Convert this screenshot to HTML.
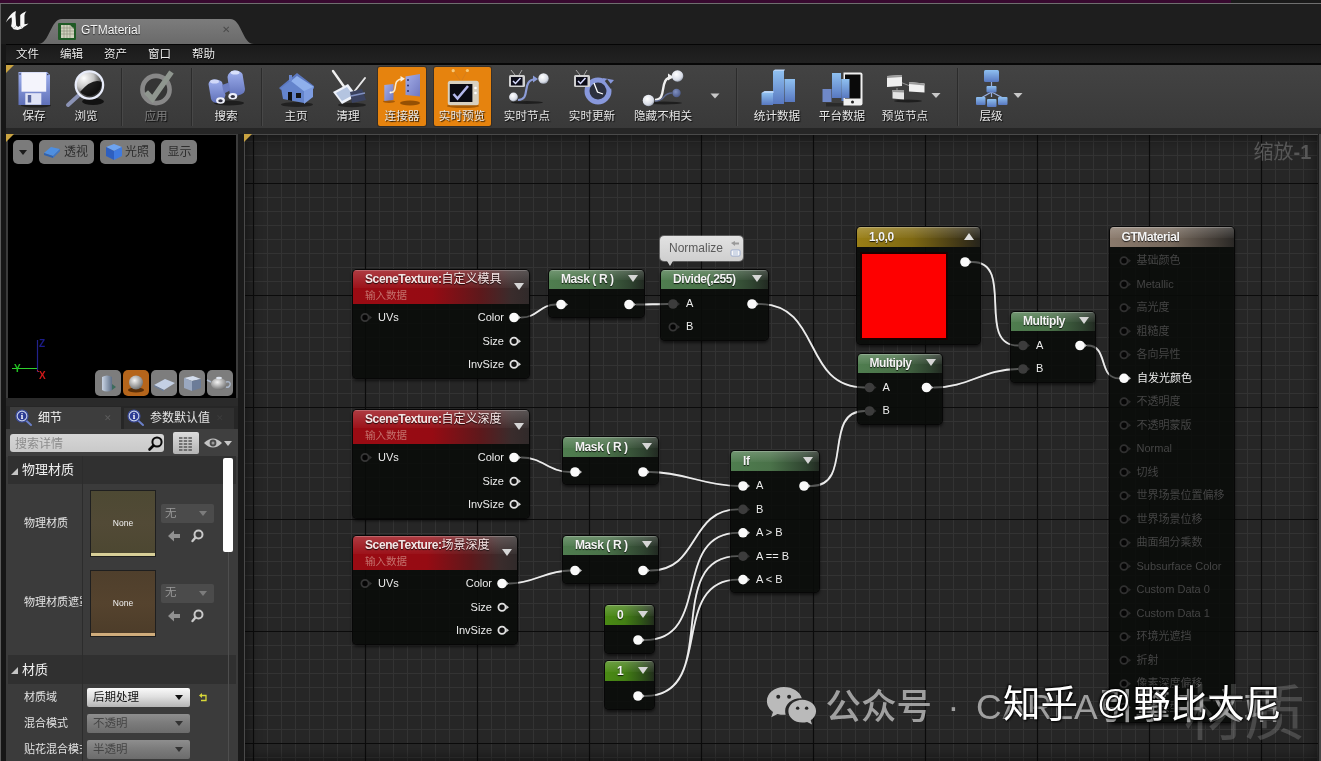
<!DOCTYPE html>
<html lang="zh"><head><meta charset="utf-8"><title>GTMaterial</title><style>
*{box-sizing:border-box;margin:0;padding:0}
html,body{width:1321px;height:761px;overflow:hidden;background:#1d1d1d}
body{position:relative;font-family:"Liberation Sans","Noto Sans CJK SC",sans-serif;font-size:12px;color:#e6e6e6;line-height:1}
#app{position:absolute;left:0;top:0;width:1321px;height:761px;overflow:hidden;will-change:transform}
.a{position:absolute}
.t{position:absolute;white-space:nowrap;line-height:1}
.c{transform:translateY(-50%)}
#menubar span{position:absolute;top:10px;font-size:11.5px;color:#ececec;transform:translateY(-50%);text-shadow:0 1px 1px #000}
.tl{position:absolute;top:116px;font-size:11.6px;color:#e6e6e6;transform:translate(-50%,-50%);white-space:nowrap;text-shadow:1px 1px 1px rgba(0,0,0,.85)}
.sep{position:absolute;top:68px;width:1px;height:58px;background:#2b2b2b;box-shadow:1px 0 0 #474747}
.hot{position:absolute;top:67px;height:59px;background:#e6830e;border-radius:2px;box-shadow:0 0 0 1px rgba(40,20,0,.35)}
.corner{position:absolute;width:0;height:0;border-top:8px solid #c9a341;border-right:8px solid transparent}
.node{position:absolute;border-radius:4px;background:rgba(9,11,9,.88);box-shadow:0 0 0 1px #070707,0 2px 3px 1px rgba(0,0,0,.55)}
.hd{position:absolute;left:0;top:0;right:0;border-radius:4px 4px 0 0;overflow:hidden}
.hd:after{content:"";position:absolute;left:0;right:0;top:0;height:55%;background:linear-gradient(to bottom,rgba(255,255,255,.2),rgba(255,255,255,.03));box-shadow:inset 0 1px 0 rgba(255,255,255,.22)}
.nt b{font-weight:normal;letter-spacing:0}
.nt{position:absolute;font-weight:bold;font-size:12px;letter-spacing:-.4px;color:#f4f4f4;white-space:nowrap;transform:translateY(-50%);text-shadow:0 1px 1px rgba(0,0,0,.8);z-index:2}
.ns{position:absolute;font-size:10.5px;color:#c4706c;white-space:nowrap;transform:translateY(-50%);z-index:2}
.pl{position:absolute;font-size:11px;color:#ececec;white-space:nowrap;transform:translateY(-50%)}
.pr{position:absolute;font-size:11px;color:#ececec;white-space:nowrap;transform:translate(-100%,-50%)}
.pd{position:absolute;font-size:11px;color:#454545;white-space:nowrap;transform:translateY(-50%)}
.tri{position:absolute;width:0;height:0;border-left:5px solid transparent;border-right:5px solid transparent;border-top:7px solid #d6d6d6;z-index:2}
.triu{position:absolute;width:0;height:0;border-left:5px solid transparent;border-right:5px solid transparent;border-bottom:7px solid #e0e0e0;z-index:2}
.vb{position:absolute;height:26px;border-radius:5px;background:#7b7b7b}
.lab{position:absolute;font-size:11px;color:#e2e2e2;white-space:nowrap;transform:translateY(-50%)}
.dd{position:absolute;height:19px;border-radius:2px;font-size:11.5px}
.dd span{position:absolute;left:8px;top:50%;transform:translateY(-50%);white-space:nowrap}
.dd i{position:absolute;right:7px;top:7px;width:0;height:0;border-left:4.5px solid transparent;border-right:4.5px solid transparent;border-top:5px solid #111}
</style></head><body>
<div id="app">
<div class="a" style="left:0;top:0;width:1321px;height:44px;background:#1e1e1e"></div>
<div class="a" style="left:0;top:0;width:1231px;height:3px;background:#38092f"></div>
<div class="a" style="left:1231px;top:0;width:90px;height:3px;background:#1a1a1a"></div>
<div class="a" style="left:0;top:3px;width:1321px;height:1px;background:#6f6f6f"></div>
<div class="a" style="left:0;top:4px;width:1px;height:757px;background:#5c5c5c"></div>
<div class="a" style="left:1px;top:44px;width:5px;height:717px;background:#161616"></div>
<svg class="a" style="left:0;top:4px" width="60" height="35" viewBox="0 0 1305 761"><g fill="#f8f8f8"><path d="M130 400 C175 285 255 190 345 150 L335 235 C342 300 346 400 352 470 L300 525 L240 485 C262 410 262 330 250 288 C200 318 160 358 130 400Z"/><path d="M575 158 C505 188 455 218 440 242 L440 470 L482 532 L522 492 C562 472 592 452 618 424 C588 436 560 441 532 441 L532 252 C536 216 552 186 575 158Z"/><path d="M240 485 L300 525 L352 470 L396 502 L440 470 L482 532 L385 566 L295 548Z"/></g></svg>
<svg class="a" style="left:38px;top:19px" width="216" height="25" viewBox="0 0 216 25"><defs><linearGradient id="tg" x1="0" y1="0" x2="0" y2="1"><stop offset="0" stop-color="#7c7c7c"/><stop offset="1" stop-color="#6a6a6a"/></linearGradient></defs><path d="M0 25 C12 25 12 0 24 0 L192 0 C204 0 204 25 216 25 Z" fill="url(#tg)"/><rect x="20" y="4" width="18" height="17" rx="1" fill="#1f5a25"/><path d="M23 6 h9 l4 4 v9 h-13 z" fill="#cfd2bd"/><path d="M23 9h13M23 12h13M23 15h13M26 6v13M29 6v13M32 6v13" stroke="#8f947e" stroke-width=".7"/></svg>
<div class="t c" style="left:81px;top:30px;font-size:12px;color:#f4f4f4;text-shadow:0 1px 1px #222">GTMaterial</div>
<div class="t c" style="left:222px;top:30px;font-size:10px;color:#4a4a4a">✕</div>
<div class="a" style="left:6px;top:44px;width:1315px;height:1px;background:#050505"></div>
<div class="a" id="menubar" style="left:6px;top:45px;width:1315px;height:18px;background:linear-gradient(#1a1a1a,#222)"><span style="left:10px">文件</span><span style="left:54px">编辑</span><span style="left:98px">资产</span><span style="left:142px">窗口</span><span style="left:186px">帮助</span></div>
<div class="a" style="left:6px;top:63px;width:1315px;height:2px;background:#070707"></div>
<div class="a" style="left:6px;top:65px;width:1315px;height:63px;background:linear-gradient(#434343,#393939)"></div>
<div class="a" style="left:6px;top:128px;width:1315px;height:6px;background:#262626"></div>
<div class="corner" style="left:6px;top:65px"></div>
<div class="hot" style="left:378px;width:48px"></div>
<div class="hot" style="left:434px;width:57px"></div>
<div class="sep" style="left:121px"></div>
<div class="sep" style="left:191px"></div>
<div class="sep" style="left:261px"></div>
<div class="sep" style="left:736px"></div>
<div class="sep" style="left:957px"></div>
<div class="tl" style="left:34px;color:#e6e6e6">保存</div>
<div class="tl" style="left:86px;color:#e6e6e6">浏览</div>
<div class="tl" style="left:156px;color:#808080">应用</div>
<div class="tl" style="left:226px;color:#e6e6e6">搜索</div>
<div class="tl" style="left:296px;color:#e6e6e6">主页</div>
<div class="tl" style="left:348px;color:#e6e6e6">清理</div>
<div class="tl" style="left:402px;color:#e6e6e6">连接器</div>
<div class="tl" style="left:462px;color:#e6e6e6">实时预览</div>
<div class="tl" style="left:527px;color:#e6e6e6">实时节点</div>
<div class="tl" style="left:592px;color:#e6e6e6">实时更新</div>
<div class="tl" style="left:663px;color:#e6e6e6">隐藏不相关</div>
<div class="tl" style="left:777px;color:#e6e6e6">统计数据</div>
<div class="tl" style="left:842px;color:#e6e6e6">平台数据</div>
<div class="tl" style="left:905px;color:#e6e6e6">预览节点</div>
<div class="tl" style="left:991px;color:#e6e6e6">层级</div>
<svg class="a" style="left:0;top:64px" width="1321" height="64" viewBox="0 64 1321 64">
<defs>
<linearGradient id="lav" x1="0" y1="0" x2="0" y2="1"><stop offset="0" stop-color="#9fb0ee"/><stop offset="1" stop-color="#5f70b8"/></linearGradient>
<linearGradient id="blu" x1="0" y1="0" x2="0" y2="1"><stop offset="0" stop-color="#8fc0f0"/><stop offset="1" stop-color="#5878c0"/></linearGradient>
<linearGradient id="blu2" x1="0" y1="0" x2="1" y2="1"><stop offset="0" stop-color="#a4aee8"/><stop offset="1" stop-color="#7078c0"/></linearGradient>
<radialGradient id="lens" cx=".3" cy=".25" r=".9"><stop offset="0" stop-color="#ffffff"/><stop offset=".4" stop-color="#c4c4c4"/><stop offset=".7" stop-color="#4a4a4a"/><stop offset="1" stop-color="#111"/></radialGradient>
<radialGradient id="ball" cx=".4" cy=".35" r=".7"><stop offset="0" stop-color="#ffffff"/><stop offset=".7" stop-color="#d8dce6"/><stop offset="1" stop-color="#9098a8"/></radialGradient>
<radialGradient id="ballb" cx=".4" cy=".35" r=".7"><stop offset="0" stop-color="#8090c0"/><stop offset="1" stop-color="#4a5888"/></radialGradient>
</defs>
<ellipse cx="36" cy="105.5" rx="15" ry="2" fill="#000" opacity="0.45"/>
<path d="M18.500 72 H47 L50 75 V105 H18.500z" fill="url(#lav)"/>
<rect x="21.500" y="72.300" width="24.700" height="19.400" fill="#f4f4fc"/><circle cx="20" cy="74" r=".8" fill="#334"/><circle cx="47.800" cy="74.500" r=".8" fill="#334"/>
<rect x="25.300" y="93.200" width="16" height="11.500" fill="#e0e4f6"/><rect x="27.800" y="95" width="3.400" height="7.500" fill="#56649c"/>
<ellipse cx="93" cy="101.5" rx="11" ry="3.5" fill="#000" opacity="0.7"/>
<path d="M79 95 L68 105" stroke="#8a92b4" stroke-width="4" stroke-linecap="round"/>
<circle cx="89.400" cy="85" r="13.700" fill="url(#lens)" stroke="#e8ecfa" stroke-width="2.300"/>
<path d="M80 92 Q92 78 101.500 82 A12.500 12.500 0 0 1 80 92z" fill="#0c0c0c" opacity=".9"/>
<circle cx="156" cy="89.500" r="13.600" fill="#353535" stroke="#888" stroke-width="4.600"/>
<path d="M146 92 L152.500 99 L171.500 72" fill="none" stroke="#8f968f" stroke-width="5.500" stroke-linejoin="miter"/>
<ellipse cx="229" cy="103" rx="15" ry="2.5" fill="#000" opacity="0.5"/>
<path d="M208.500 84 q.500 -4 5 -4.500 q6 -.500 8.500 2.500 l3.500 13 q-1 6 -8 8 q-5 0 -6.500 -4z" fill="url(#lav)"/>
<path d="M227.500 77 q.500 -5 6.500 -6.500 q6 -.500 8.500 3.500 l2.500 15 q0 4 -4 5.500 l-8 2.500 q-3 -1 -3.500 -5z" fill="url(#lav)"/>
<path d="M222 85 l7 -2.500 l1 8 l-6 3z" fill="#6c7cc0"/>
<ellipse cx="214.500" cy="81.500" rx="4.500" ry="2" fill="#d0d8f8"/><ellipse cx="235" cy="72.500" rx="4.500" ry="2" fill="#d8e0fc"/>
<ellipse cx="220.500" cy="100.500" rx="4.400" ry="3.300" fill="#eef0fa"/><ellipse cx="220.500" cy="100.800" rx="2.200" ry="1.500" fill="#334"/>
<ellipse cx="232.800" cy="96.300" rx="4.400" ry="3.300" fill="#eef0fa"/><ellipse cx="232.800" cy="96.600" rx="2.200" ry="1.500" fill="#334"/>
<ellipse cx="297" cy="104.5" rx="16" ry="2.5" fill="#000" opacity="0.45"/>
<path d="M279 88 L297 73 L314 86 L314 89 L297 78 L281 90z" fill="#5c78c0"/>
<path d="M281 88 L297 76 L304 82 V103 L283 99z" fill="#6484cc"/>
<path d="M297 76 L314 87 L305 92 L291 81z" fill="#8fb0ec"/>
<path d="M304 91 L313 87 V97 L304 104z" fill="#7d9ce0"/>
<rect x="289" y="75" width="3" height="6" fill="#6a88d0"/>
<path d="M288 92 h4 v9 l-4 -1z" fill="#111"/><path d="M296 93 h5 v5 h-5z" fill="#151515"/>
<ellipse cx="352" cy="105" rx="14" ry="2.2" fill="#000" opacity="0.45"/>
<path d="M333 71 L345 88" stroke="#f0f0f0" stroke-width="2.400" stroke-linecap="round"/>
<path d="M333 92 L348 84 L357 96 L342 104z" fill="#eef2fa"/><path d="M336 93 L347 87 L353 95 L342 101z" fill="#b4c4e0"/>
<path d="M354 92 L365 78" stroke="#e8e8e8" stroke-width="2" stroke-linecap="round"/>
<path d="M350 92 L362 89 L366 100 L352 103z" fill="#3a4260"/><path d="M351 96 l14 -3" stroke="#8090c0" stroke-width="1.500"/>
<ellipse cx="410" cy="103" rx="10" ry="2.600" fill="#6a3400" opacity=".65"/><ellipse cx="389" cy="101.500" rx="6" ry="1.500" fill="#6a3400" opacity=".5"/>
<path d="M384.300 85 L393.500 84 V100 L384.300 101z" fill="url(#blu2)"/>
<path d="M405.500 76.500 L420 74 V96.500 L405.500 95z" fill="url(#blu2)"/>
<path d="M391 92.500 C399 92 391 80 402 79" fill="none" stroke="#fbe8c8" stroke-width="1.600"/><path d="M400.500 76 l4.500 2.800 l-4.500 3z" fill="#fbf0dc"/>
<circle cx="408" cy="80" r="1" fill="#2a3070"/><circle cx="408" cy="85.500" r="1" fill="#2a3070"/><circle cx="408" cy="91" r="1" fill="#2a3070"/><circle cx="390.500" cy="92.500" r="1" fill="#fff"/>
<ellipse cx="463" cy="106" rx="16" ry="2" fill="#7a3e00" opacity=".6"/>
<circle cx="453.200" cy="70.700" r="1.600" fill="#f6c878"/><circle cx="467.400" cy="70.500" r="1.600" fill="#f6c878"/>
<path d="M454 72 L460 80 M466.500 72 L462 80" stroke="#d07c20" stroke-width=".8"/>
<rect x="447.800" y="80.700" width="31" height="24.600" rx="2.500" fill="#d8d0c0"/>
<rect x="449.800" y="84" width="22.600" height="18" fill="#0a0a12"/>
<path d="M453.500 94 L457.500 98.500 L468 86" fill="none" stroke="#b4b8ec" stroke-width="2.600"/>
<circle cx="475.500" cy="88" r="1.300" fill="#fff"/><circle cx="475.500" cy="93" r="1.300" fill="#fff"/>
<path d="M511 70 l4 5 M522 70 l-3 5" stroke="#bbb" stroke-width=".8"/>
<rect x="509" y="75" width="16" height="12" rx="1.500" fill="#d0d0d0"/><rect x="511" y="77" width="11.500" height="8.500" fill="#0c0c18"/><path d="M513 81 l2.500 2.500 l5 -5.500" fill="none" stroke="#d8dcff" stroke-width="1.500"/>
<path d="M518 100 C532 100 520 80 536 79" fill="none" stroke="#8c9cd8" stroke-width="2.200"/><path d="M533 75.500 l5 3.500 l-5 3.500z" fill="#8c9cd8"/>
<circle cx="543.500" cy="78.500" r="5.200" fill="url(#ball)"/><circle cx="513.500" cy="97" r="4.400" fill="url(#ball)"/>
<ellipse cx="527" cy="102.5" rx="16" ry="1.5" fill="#000" opacity="0.5"/>
<path d="M576 70 l4 5 M587 70 l-3 5" stroke="#bbb" stroke-width=".8"/>
<circle cx="598" cy="91" r="11" fill="#2c3040" stroke="#8898dc" stroke-width="5"/>
<path d="M603 78 l11 2 l-8 9z" fill="#8898dc"/><path d="M606 80 l6 8" stroke="#3c3c3c" stroke-width="3"/>
<path d="M594 83 L597.500 92 L603 94" fill="none" stroke="#fff" stroke-width="1.300"/>
<rect x="574" y="75" width="16" height="12" rx="1.500" fill="#d0d0d0"/><rect x="576" y="77" width="11.500" height="8.500" fill="#0c0c18"/><path d="M578 81 l2.500 2.500 l5 -5.500" fill="none" stroke="#d8dcff" stroke-width="1.500"/>
<ellipse cx="664" cy="103" rx="18" ry="1.5" fill="#000" opacity="0.5"/>
<path d="M655 100 C668 100 658 78 672 77" fill="none" stroke="#f0f0f0" stroke-width="2.400"/><path d="M668 73.500 l5.500 3.500 l-5.500 3.500z" fill="#f0f0f0"/>
<path d="M655 101 C666 101 662 93 672 93" fill="none" stroke="#5c6890" stroke-width="1.500"/>
<circle cx="677.500" cy="76" r="5.800" fill="url(#ball)"/><circle cx="676.500" cy="93" r="4.200" fill="url(#ballb)"/><circle cx="648.500" cy="100.500" r="5.800" fill="url(#ball)"/>
<path d="M710.5 93.5 h9 l-4.500 5z" fill="#c8c8c8"/>
<path d="M931.5 93 h9 l-4.500 5z" fill="#c8c8c8"/>
<path d="M1013.5 93 h9 l-4.500 5z" fill="#c8c8c8"/>
<path d="M761.500 93 h11.500 v12 h-11.500z" fill="url(#blu)"/><path d="M773 71 h11 v33 h-11z" fill="url(#blu)"/><path d="M784.500 79 h10.500 v23 h-10.500z" fill="url(#blu)"/>
<path d="M761.500 93 l3 -2 h9 v2z" fill="#b8d4f8"/><path d="M773 71 l2 -1.500 h10 l-1 1.500z" fill="#b8d4f8"/>
<path d="M822.500 89 h9 v13 h-9z" fill="#6f88c8"/><path d="M832 73 h9 v25 h-9z" fill="url(#blu)"/><path d="M841.500 79 h8 v22 h-8z" fill="url(#blu)"/>
<path d="M826 103 h26 l-2 3.500 h-24z" fill="#222" opacity=".7"/>
<path d="M843.500 72.500 h17 q2 0 2 2 v29 q0 2 -2 2 h-17z" fill="#f0f0f0"/><path d="M845 74.500 h15.500 v24 h-15.500z" fill="#0a0a0a"/><circle cx="852.500" cy="102" r="1.500" fill="#222"/>
<path d="M841.500 79 h8 v19 h-8z" fill="url(#blu)"/>
<path d="M900 82 L910 86 M897 88 L897 91" stroke="#aaa" stroke-width=".8"/>
<path d="M887 76 l15 -1 v11 l-15 1z" fill="#f0f0f0"/><path d="M909 82 l15.500 1.500 v9 l-15.500 -1z" fill="#f0f0f0"/><path d="M892.500 90 l11.500 .5 v9 l-11.500 -1z" fill="#e4e4e4"/>
<path d="M887 76 l15 -1 v2 l-15 1z M909 82 l15.500 1.500 v2 l-15.500 -1.500z M892.500 90 l11.500 .5 v2 l-11.500 -.5z" fill="#9a9a9a"/>
<ellipse cx="908" cy="101" rx="14" ry="1.5" fill="#000" opacity="0.5"/>
<path d="M991.500 81 V87 M991.500 92 V97 M991.500 92 L981 98 M991.500 92 L1003 98" stroke="#9ab0e0" stroke-width="1.200"/>
<rect x="984" y="70" width="15" height="12" rx="1.500" fill="url(#blu)"/><rect x="986.500" y="86" width="10" height="6.500" rx="1" fill="url(#blu)"/>
<rect x="976" y="97" width="9.500" height="8" rx="1" fill="url(#blu)"/><rect x="987" y="99" width="9.500" height="8" rx="1" fill="url(#blu)"/><rect x="998" y="97" width="9.500" height="8" rx="1" fill="url(#blu)"/>
</svg>
<div class="a" style="left:6px;top:134px;width:232px;height:627px;background:#3b3b3b"></div>
<div class="a" style="left:238px;top:134px;width:6px;height:627px;background:#1a1a1a"></div>
<div class="a" style="left:8px;top:135px;width:228px;height:263px;background:#000"></div>
<div class="corner" style="left:6px;top:134px"></div>
<div class="vb" style="left:13px;top:140px;width:20px;height:24px"></div>
<div class="a" style="left:18.500px;top:150px;width:0;height:0;border-left:4.500px solid transparent;border-right:4.500px solid transparent;border-top:5px solid #1c1c1c"></div>
<div class="vb" style="left:39px;top:140px;width:55px;height:24px"></div>
<svg class="a" style="left:43px;top:144px" width="18" height="15" viewBox="0 0 18 15"><path d="M1 9 L8 3 L17 5 L10 12z" fill="#4f8fe0"/><path d="M1 9 L10 12 v2 L1 11z" fill="#2f62b0"/><path d="M10 12 L17 5 v2 L10 14z" fill="#3a74c8"/></svg>
<div class="t c" style="left:64px;top:152px;font-size:12px;color:#2e2e2e">透视</div>
<div class="vb" style="left:100px;top:140px;width:55px;height:24px"></div>
<svg class="a" style="left:105px;top:143px" width="18" height="18" viewBox="0 0 18 18"><path d="M1 4 L9 1 L17 4 L9 8z" fill="#6ea4f0"/><path d="M1 4 L9 8 V17 L1 13z" fill="#2e5fc0"/><path d="M9 8 L17 4 V13 L9 17z" fill="#3f7ae0"/></svg>
<div class="t c" style="left:125px;top:152px;font-size:12px;color:#2e2e2e">光照</div>
<div class="vb" style="left:161px;top:140px;width:36px;height:24px"></div>
<div class="t c" style="left:167.500px;top:152px;font-size:12px;color:#2e2e2e">显示</div>
<svg class="a" style="left:7px;top:335px" width="50" height="48" viewBox="8 336 50 48"><path d="M38.500 341 V373" stroke="#22228c" stroke-width="1.200"/><path d="M13 369.500 H38" stroke="#2fd02f" stroke-width="1"/><path d="M38 371 l2 2" stroke="#c02020" stroke-width="1"/><text x="15" y="373" font-size="10" font-weight="bold" fill="#20c020" font-family="Liberation Sans,sans-serif">Y</text><text x="40" y="380" font-size="10" font-weight="bold" fill="#d01818" font-family="Liberation Sans,sans-serif">X</text><text x="40" y="348" font-size="10" font-weight="bold" fill="#1c1c88" font-family="Liberation Sans,sans-serif">Z</text></svg>
<div class="a" style="left:95px;top:370px;width:26px;height:26px;border-radius:5px;background:#7d7d7d"></div>
<div class="a" style="left:123px;top:370px;width:26px;height:26px;border-radius:5px;background:#b5651b"></div>
<div class="a" style="left:151px;top:370px;width:26px;height:26px;border-radius:5px;background:#7d7d7d"></div>
<div class="a" style="left:179px;top:370px;width:26px;height:26px;border-radius:5px;background:#7d7d7d"></div>
<div class="a" style="left:207px;top:370px;width:26px;height:26px;border-radius:5px;background:#7d7d7d"></div>
<svg class="a" style="left:95px;top:370px" width="138" height="26" viewBox="0 0 138 26"><defs><linearGradient id="cy" x1="0" x2="1"><stop offset="0" stop-color="#c9d4e4"/><stop offset="1" stop-color="#5f7088"/></linearGradient><radialGradient id="sp" cx=".4" cy=".35" r=".7"><stop offset="0" stop-color="#f4f4f4"/><stop offset="1" stop-color="#6a6a6a"/></radialGradient></defs><path d="M7 7 q5 -3 10 0 v13 q-5 3 -10 0z" fill="url(#cy)"/><path d="M17 14 l4 3 l-4 3z" fill="#3c6a5c"/><ellipse cx="41" cy="20" rx="8" ry="2.500" fill="#5a2f08"/><circle cx="41" cy="12.500" r="7" fill="url(#sp)"/><path d="M59 15 L70 9 L80 13 L69 20z" fill="#c4d0e4"/><path d="M59 15 L69 20 v1.500 L59 16.500z" fill="#6f7f99"/><path d="M89 8 L98 6 L106 9 L97 11z" fill="#d4deee"/><path d="M89 8 L97 11 V21 L89 18z" fill="#9aa8c0"/><path d="M97 11 L106 9 V18 L97 21z" fill="#6c7c98"/><ellipse cx="124" cy="14" rx="8" ry="6" fill="url(#sp)"/><path d="M131 12 q5 -1 4 3 q-1 3 -4 2" stroke="#aab6c8" stroke-width="1.500" fill="none"/><path d="M116 12 l-4 -2" stroke="#aab6c8" stroke-width="1.500"/><ellipse cx="124" cy="8" rx="3" ry="1.200" fill="#e0e6f0"/></svg>
<div class="a" style="left:6px;top:398px;width:232px;height:8px;background:#2a2a2a"></div>
<div class="a" style="left:6px;top:406px;width:232px;height:23px;background:#262626"></div>
<div class="a" style="left:10px;top:407px;width:111px;height:22px;background:#3d3d3d"></div>
<div class="a" style="left:124px;top:408px;width:110px;height:21px;background:#303030"></div>
<svg class="a" style="left:15px;top:409px" width="18" height="18" viewBox="0 0 18 18"><path d="M10.500 11 L16 16" stroke="#6a7fc8" stroke-width="2" stroke-linecap="round"/><circle cx="7" cy="7" r="6" fill="#c8d2ea" stroke="#3a4a9a" stroke-width="1.200"/><circle cx="7" cy="7" r="4.300" fill="#2d3c94"/><text x="7" y="10.300" text-anchor="middle" font-family="Liberation Serif,serif" font-weight="bold" font-size="9" fill="#fff">i</text></svg>
<svg class="a" style="left:127px;top:409px" width="18" height="18" viewBox="0 0 18 18"><path d="M10.500 11 L16 16" stroke="#6a7fc8" stroke-width="2" stroke-linecap="round"/><circle cx="7" cy="7" r="6" fill="#c8d2ea" stroke="#3a4a9a" stroke-width="1.200"/><circle cx="7" cy="7" r="4.300" fill="#2d3c94"/><text x="7" y="10.300" text-anchor="middle" font-family="Liberation Serif,serif" font-weight="bold" font-size="9" fill="#fff">i</text></svg>
<div class="t c" style="left:38px;top:418px;font-size:12px;color:#f0f0f0">细节</div>
<div class="t c" style="left:104px;top:418px;font-size:9px;color:#5c5c5c">✕</div>
<div class="t c" style="left:150px;top:418px;font-size:12px;color:#e4e4e4">参数默认值</div>
<div class="t c" style="left:216px;top:418px;font-size:9px;color:#3c3c3c">✕</div>
<div class="a" style="left:6px;top:429px;width:232px;height:28px;background:#3f3f3f"></div>
<div class="a" style="left:10px;top:434px;width:154px;height:18px;border-radius:3px;background:linear-gradient(#d6d6d6,#c9c9c9)"></div>
<div class="t c" style="left:15px;top:443.500px;font-size:12px;color:#8c8c8c">搜索详情</div>
<svg class="a" style="left:147px;top:435px" width="17" height="17" viewBox="0 0 17 17"><circle cx="10" cy="7" r="4.600" fill="none" stroke="#0a0a0a" stroke-width="2"/><path d="M6.500 10.500 L2.500 14.500" stroke="#0a0a0a" stroke-width="2.600" stroke-linecap="round"/></svg>
<div class="a" style="left:173px;top:432px;width:26px;height:22px;border-radius:2px;background:linear-gradient(#dcdcdc,#b4b4b4)"></div>
<svg class="a" style="left:178px;top:436px" width="16" height="15" viewBox="0 0 16 15"><path d="M1 2h14M1 5h14M1 8h14M1 11h14M1 14h14" stroke="#555" stroke-width="1.600" stroke-dasharray="3.500 1.200"/></svg>
<svg class="a" style="left:203px;top:436px" width="20" height="14" viewBox="0 0 20 14"><path d="M1 7 Q10 -2 19 7 Q10 16 1 7z" fill="#c4c4c4"/><circle cx="10" cy="7" r="3.400" fill="#4a4a4a"/><circle cx="10" cy="7" r="1.500" fill="#9a9a9a"/></svg>
<div class="a" style="left:224px;top:441px;width:0;height:0;border-left:4px solid transparent;border-right:4px solid transparent;border-top:5px solid #c8c8c8"></div>
<div class="a" style="left:8px;top:456px;width:228px;height:28px;background:#303030"></div>
<div class="a" style="left:11px;top:467.5px;width:0;height:0;border-bottom:7px solid #c4c4c4;border-left:7px solid transparent"></div>
<div class="t c" style="left:22px;top:469px;font-size:13px;color:#efefef">物理材质</div>
<div class="a" style="left:8px;top:655px;width:228px;height:29px;background:#303030"></div>
<div class="a" style="left:11px;top:667px;width:0;height:0;border-bottom:7px solid #c4c4c4;border-left:7px solid transparent"></div>
<div class="t c" style="left:22px;top:668.5px;font-size:13px;color:#efefef">材质</div>
<div class="a" style="left:82px;top:456px;width:1px;height:305px;background:#2c2c2c"></div>
<div class="a" style="left:228px;top:552px;width:1px;height:209px;background:#4e4e4e"></div>
<div class="a" style="left:90px;top:490px;width:66px;height:67px;background:#1f1f1f"></div>
<div class="a" style="left:91px;top:491px;width:64px;height:65px;background:linear-gradient(#4d4933,#524a36 50%,#4c4731)"></div>
<div class="a" style="left:91px;top:553px;width:64px;height:3px;background:#d8cf98"></div>
<div class="t" style="left:123px;top:523px;font-size:8.500px;color:#f4f4f4;transform:translate(-50%,-50%)">None</div>
<div class="dd" style="left:161px;top:504px;width:53px;background:#4b4b4b;color:#9a9a9a"><span style="left:4px">无</span><i style="border-top-color:#7c7c7c"></i></div>
<svg class="a" style="left:166px;top:528px" width="42" height="16" viewBox="0 0 42 16"><path d="M2 8 L8 2.500 V6 H14 V10 H8 V13.500z" fill="#909090"/><circle cx="32.500" cy="6.500" r="4" fill="none" stroke="#c8c8c8" stroke-width="2"/><path d="M29.500 9.500 L26.500 13" stroke="#c8c8c8" stroke-width="2.400" stroke-linecap="round"/></svg>
<div class="a" style="left:90px;top:569.5px;width:66px;height:67px;background:#1f1f1f"></div>
<div class="a" style="left:91px;top:570.5px;width:64px;height:65px;background:linear-gradient(#4f3f2c,#55432e 50%,#4c3c29)"></div>
<div class="a" style="left:91px;top:632.5px;width:64px;height:3px;background:#d0ad7c"></div>
<div class="t" style="left:123px;top:602.5px;font-size:8.500px;color:#f4f4f4;transform:translate(-50%,-50%)">None</div>
<div class="dd" style="left:161px;top:583.5px;width:53px;background:#4b4b4b;color:#9a9a9a"><span style="left:4px">无</span><i style="border-top-color:#7c7c7c"></i></div>
<svg class="a" style="left:166px;top:607.5px" width="42" height="16" viewBox="0 0 42 16"><path d="M2 8 L8 2.500 V6 H14 V10 H8 V13.500z" fill="#909090"/><circle cx="32.500" cy="6.500" r="4" fill="none" stroke="#c8c8c8" stroke-width="2"/><path d="M29.500 9.500 L26.500 13" stroke="#c8c8c8" stroke-width="2.400" stroke-linecap="round"/></svg>
<div class="lab" style="left:24px;top:523px">物理材质</div>
<div class="a" style="left:24px;top:590px;width:58px;height:24px;overflow:hidden"><div class="lab" style="left:0;top:12px">物理材质遮罩</div></div>
<div class="a" style="left:223px;top:458px;width:10px;height:94px;border-radius:2px;background:#fff"></div>
<div class="lab" style="left:24px;top:697px">材质域</div>
<div class="lab" style="left:24px;top:723px">混合模式</div>
<div class="a" style="left:24px;top:737px;width:58px;height:24px;overflow:hidden"><div class="lab" style="left:0;top:12px">贴花混合模式</div></div>
<div class="dd" style="left:87px;top:688px;width:103px;background:linear-gradient(#fafafa,#e0e0e0 45%,#b4b4b4);color:#111"><span style="left:6px">后期处理</span><i></i></div>
<div class="dd" style="left:87px;top:714px;width:103px;background:linear-gradient(#8e8e8e,#7c7c7c 45%,#6c6c6c);color:#454545"><span style="left:6px">不透明</span><i style="border-top-color:#333"></i></div>
<div class="dd" style="left:87px;top:740px;width:103px;background:linear-gradient(#8e8e8e,#7c7c7c 45%,#6c6c6c);color:#454545"><span style="left:6px">半透明</span><i style="border-top-color:#333"></i></div>
<svg class="a" style="left:198px;top:692px" width="10" height="10" viewBox="0 0 10 10"><path d="M3 3.500 H8 V8.500 H3" fill="none" stroke="#d8d838" stroke-width="1.300"/><path d="M4 1 L1 3.500 L4 6z" fill="#d8d838"/></svg>
<svg class="a" style="left:244px;top:134px" width="1077" height="627" viewBox="244 134 1077 627"><rect x="244" y="134" width="1077" height="627" fill="#262626"/><path d="M253.5 134 V761 M267.5 134 V761 M281.5 134 V761 M295.5 134 V761 M309.5 134 V761 M323.5 134 V761 M337.5 134 V761 M351.5 134 V761 M365.5 134 V761 M379.5 134 V761 M393.5 134 V761 M407.5 134 V761 M421.5 134 V761 M435.5 134 V761 M449.5 134 V761 M463.5 134 V761 M477.5 134 V761 M491.5 134 V761 M505.5 134 V761 M519.5 134 V761 M533.5 134 V761 M547.5 134 V761 M561.5 134 V761 M575.5 134 V761 M589.5 134 V761 M603.5 134 V761 M617.5 134 V761 M631.5 134 V761 M645.5 134 V761 M659.5 134 V761 M673.5 134 V761 M687.5 134 V761 M701.5 134 V761 M715.5 134 V761 M729.5 134 V761 M743.5 134 V761 M757.5 134 V761 M771.5 134 V761 M785.5 134 V761 M799.5 134 V761 M813.5 134 V761 M827.5 134 V761 M841.5 134 V761 M855.5 134 V761 M869.5 134 V761 M883.5 134 V761 M897.5 134 V761 M911.5 134 V761 M925.5 134 V761 M939.5 134 V761 M953.5 134 V761 M967.5 134 V761 M981.5 134 V761 M995.5 134 V761 M1009.5 134 V761 M1023.5 134 V761 M1037.5 134 V761 M1051.5 134 V761 M1065.5 134 V761 M1079.5 134 V761 M1093.5 134 V761 M1107.5 134 V761 M1121.5 134 V761 M1135.5 134 V761 M1149.5 134 V761 M1163.5 134 V761 M1177.5 134 V761 M1191.5 134 V761 M1205.5 134 V761 M1219.5 134 V761 M1233.5 134 V761 M1247.5 134 V761 M1261.5 134 V761 M1275.5 134 V761 M1289.5 134 V761 M1303.5 134 V761 M1317.5 134 V761 M244 141.5 H1321 M244 155.5 H1321 M244 169.5 H1321 M244 183.5 H1321 M244 197.5 H1321 M244 211.5 H1321 M244 225.5 H1321 M244 239.5 H1321 M244 253.5 H1321 M244 267.5 H1321 M244 281.5 H1321 M244 295.5 H1321 M244 309.5 H1321 M244 323.5 H1321 M244 337.5 H1321 M244 351.5 H1321 M244 365.5 H1321 M244 379.5 H1321 M244 393.5 H1321 M244 407.5 H1321 M244 421.5 H1321 M244 435.5 H1321 M244 449.5 H1321 M244 463.5 H1321 M244 477.5 H1321 M244 491.5 H1321 M244 505.5 H1321 M244 519.5 H1321 M244 533.5 H1321 M244 547.5 H1321 M244 561.5 H1321 M244 575.5 H1321 M244 589.5 H1321 M244 603.5 H1321 M244 617.5 H1321 M244 631.5 H1321 M244 645.5 H1321 M244 659.5 H1321 M244 673.5 H1321 M244 687.5 H1321 M244 701.5 H1321 M244 715.5 H1321 M244 729.5 H1321 M244 743.5 H1321 M244 757.5 H1321" stroke="#333" stroke-width="1" fill="none"/><path d="M253.5 134 V761 M365.5 134 V761 M477.5 134 V761 M589.5 134 V761 M701.5 134 V761 M813.5 134 V761 M925.5 134 V761 M1037.5 134 V761 M1149.5 134 V761 M1261.5 134 V761 M244 183.5 H1321 M244 295.5 H1321 M244 407.5 H1321 M244 519.5 H1321 M244 631.5 H1321 M244 743.5 H1321" stroke="#0b0b0b" stroke-width="1.2" fill="none"/></svg>
<div class="a" style="left:244px;top:134px;width:1077px;height:627px;box-shadow:inset 0 0 14px 2px rgba(0,0,0,.55);border-top:1px solid #4a4a4a;border-left:1px solid #4a4a4a"></div>
<div class="corner" style="left:244px;top:134px"></div>
<div class="t" style="left:1253.5px;top:142px;font-size:20px;color:#575757">缩放<b style="font-weight:bold">-1</b></div>
<div class="a" style="left:1318px;top:134px;width:1px;height:627px;background:#1c1c1c"></div>
<div class="a" style="left:1319px;top:134px;width:2px;height:627px;background:#464646"></div>
<svg class="a" style="left:0;top:0" width="1321" height="761" viewBox="0 0 1321 761"><path d="M521.5 317.5 C537.3 317.5 540.2 304.5 556.0 304.5 M636.5 304.5 C647.2 304.5 657.3 304.0 668.0 304.0 M759.5 304.0 C822.3 304.0 801.7 387.5 864.5 387.5 M521.5 457.5 C542.5 457.5 549.0 472.0 570.0 472.0 M650.5 472.0 C684.3 472.0 704.2 486.0 738.0 486.0 M509.5 583.5 C534.0 583.5 545.5 570.5 570.0 570.5 M650.5 570.5 C700.0 570.5 688.5 509.4 738.0 509.4 M645.5 640.0 C712.1 640.0 671.4 532.8 738.0 532.8 M645.5 696.0 C722.9 696.0 660.6 556.2 738.0 556.2 M645.5 696.0 C715.1 696.0 668.4 579.6 738.0 579.6 M811.5 486.0 C854.2 486.0 821.8 411.0 864.5 411.0 M934.0 387.5 C968.2 387.5 983.8 369.0 1018.0 369.0 M972.5 262.0 C1015.5 262.0 975.0 345.5 1018.0 345.5 M1087.5 345.5 C1108.9 345.5 1097.6 378.3 1119.0 378.3" fill="none" stroke="#ebebeb" stroke-width="1.8" stroke-linecap="round"/></svg>
<div class="node" style="left:353px;top:269.5px;width:176px;height:108px"><div class="hd" style="height:34px;background:linear-gradient(to right,#9a0b13 0%,#960b13 45%,#5e181b 72%,#3a2c2c 90%,#302a2a 100%)"></div><div class="nt" style="left:12px;top:9px;color:#f6e6e6">SceneTexture:<b>自定义模具</b></div><div class="ns" style="left:12px;top:25px">输入数据</div><div class="tri" style="right:5px;top:13px"></div></div>
<div class="pl" style="left:378px;top:316.8px">UVs</div>
<div class="pr" style="left:504px;top:316.8px">Color</div>
<div class="pr" style="left:504px;top:340.5px">Size</div>
<div class="pr" style="left:504px;top:363.6px">InvSize</div>
<div class="node" style="left:353px;top:409.5px;width:176px;height:108px"><div class="hd" style="height:34px;background:linear-gradient(to right,#9a0b13 0%,#960b13 45%,#5e181b 72%,#3a2c2c 90%,#302a2a 100%)"></div><div class="nt" style="left:12px;top:9px;color:#f6e6e6">SceneTexture:<b>自定义深度</b></div><div class="ns" style="left:12px;top:25px">输入数据</div><div class="tri" style="right:5px;top:13px"></div></div>
<div class="pl" style="left:378px;top:456.8px">UVs</div>
<div class="pr" style="left:504px;top:456.8px">Color</div>
<div class="pr" style="left:504px;top:480.5px">Size</div>
<div class="pr" style="left:504px;top:503.6px">InvSize</div>
<div class="node" style="left:353px;top:535.5px;width:164px;height:108px"><div class="hd" style="height:34px;background:linear-gradient(to right,#9a0b13 0%,#960b13 45%,#5e181b 72%,#3a2c2c 90%,#302a2a 100%)"></div><div class="nt" style="left:12px;top:9px;color:#f6e6e6">SceneTexture:<b>场景深度</b></div><div class="ns" style="left:12px;top:25px">输入数据</div><div class="tri" style="right:5px;top:13px"></div></div>
<div class="pl" style="left:378px;top:582.8px">UVs</div>
<div class="pr" style="left:492px;top:582.8px">Color</div>
<div class="pr" style="left:492px;top:606.5px">Size</div>
<div class="pr" style="left:492px;top:629.6px">InvSize</div>
<div class="node" style="left:549px;top:269.5px;width:95px;height:47px"><div class="hd" style="height:19.5px;background:linear-gradient(to right,#4f7d4f 0%,#4a7249 45%,#2f4430 85%,#222a22 100%)"></div><div class="nt" style="left:12px;top:9.55px">Mask ( R )</div><div class="tri" style="right:6px;top:5.75px"></div></div>
<div class="node" style="left:563px;top:437px;width:95px;height:47px"><div class="hd" style="height:19.5px;background:linear-gradient(to right,#4f7d4f 0%,#4a7249 45%,#2f4430 85%,#222a22 100%)"></div><div class="nt" style="left:12px;top:9.55px">Mask ( R )</div><div class="tri" style="right:6px;top:5.75px"></div></div>
<div class="node" style="left:563px;top:535.5px;width:95px;height:47px"><div class="hd" style="height:19.5px;background:linear-gradient(to right,#4f7d4f 0%,#4a7249 45%,#2f4430 85%,#222a22 100%)"></div><div class="nt" style="left:12px;top:9.55px">Mask ( R )</div><div class="tri" style="right:6px;top:5.75px"></div></div>
<div class="node" style="left:661px;top:269.5px;width:107px;height:70.5px"><div class="hd" style="height:19.5px;background:linear-gradient(to right,#4f7d4f 0%,#4a7249 45%,#2f4430 85%,#222a22 100%)"></div><div class="nt" style="left:12px;top:9.55px">Divide(,255)</div><div class="tri" style="right:6px;top:5.75px"></div></div>
<div class="pl" style="left:686px;top:303.3px">A</div>
<div class="pl" style="left:686px;top:326.3px">B</div>
<div class="a" style="left:660px;top:236px;width:83px;height:25px;border-radius:4px;background:linear-gradient(#e2e2e2,#cfcfcf);box-shadow:0 0 0 1px rgba(255,255,255,.25)"></div>
<div class="a" style="left:667px;top:261px;width:0;height:0;border-left:3.5px solid transparent;border-right:3.5px solid transparent;border-top:5px solid #cfcfcf"></div>
<div class="t c" style="left:669px;top:248px;font-size:12px;color:#5a5a5a">Normalize</div>
<svg class="a" style="left:730px;top:239px" width="11" height="20" viewBox="0 0 11 20"><path d="M1 4 l4 -2 v1.5 h4 v2 h-4 v1.5z" fill="#9a9a9a"/><rect x="1" y="11" width="9" height="6" rx="1" fill="#f8f8f8" stroke="#8aa0c8" stroke-width=".8"/><path d="M3 13h5M3 15h5" stroke="#8aa0c8" stroke-width=".7"/></svg>
<div class="node" style="left:731px;top:451px;width:88px;height:141px"><div class="hd" style="height:19.5px;background:linear-gradient(to right,#4f7d4f 0%,#4a7249 45%,#2f4430 85%,#222a22 100%)"></div><div class="nt" style="left:12px;top:9.55px">If</div><div class="tri" style="right:6px;top:5.75px"></div></div>
<div class="pl" style="left:756px;top:485.3px">A</div>
<div class="pl" style="left:756px;top:508.7px">B</div>
<div class="pl" style="left:756px;top:532.1px">A &gt; B</div>
<div class="pl" style="left:756px;top:555.5px">A == B</div>
<div class="pl" style="left:756px;top:578.9px">A &lt; B</div>
<div class="node" style="left:605px;top:605px;width:49px;height:47.5px"><div class="hd" style="height:20.3px;background:linear-gradient(to right,#4a8a14 0%,#437f14 40%,#2f5418 75%,#222e1c 100%)"></div><div class="nt" style="left:12px;top:9.95px">0</div><div class="tri" style="right:6px;top:6.15px"></div></div>
<div class="node" style="left:605px;top:661px;width:49px;height:47.5px"><div class="hd" style="height:20.3px;background:linear-gradient(to right,#4a8a14 0%,#437f14 40%,#2f5418 75%,#222e1c 100%)"></div><div class="nt" style="left:12px;top:9.95px">1</div><div class="tri" style="right:6px;top:6.15px"></div></div>
<div class="node" style="left:857.5px;top:353.5px;width:84px;height:70.5px"><div class="hd" style="height:19.5px;background:linear-gradient(to right,#4f7d4f 0%,#4a7249 45%,#2f4430 85%,#222a22 100%)"></div><div class="nt" style="left:12px;top:9.55px">Multiply</div><div class="tri" style="right:6px;top:5.75px"></div></div>
<div class="pl" style="left:882.5px;top:386.8px">A</div>
<div class="pl" style="left:882.5px;top:410.3px">B</div>
<div class="node" style="left:1011px;top:311.5px;width:84px;height:70.5px"><div class="hd" style="height:19.5px;background:linear-gradient(to right,#4f7d4f 0%,#4a7249 45%,#2f4430 85%,#222a22 100%)"></div><div class="nt" style="left:12px;top:9.55px">Multiply</div><div class="tri" style="right:6px;top:5.75px"></div></div>
<div class="pl" style="left:1036px;top:344.8px">A</div>
<div class="pl" style="left:1036px;top:368.3px">B</div>
<div class="node" style="left:857px;top:227px;width:123px;height:117px"><div class="hd" style="height:19.5px;background:linear-gradient(to right,#9a7f16 0%,#7e6812 45%,#3e3517 85%,#26241c 100%)"></div><div class="nt" style="left:12px;top:9.55px">1,0,0</div><div class="triu" style="right:6px;top:5.75px"></div><div class="a" style="left:3.2px;top:25.2px;width:87.6px;height:87.6px;background:#1c0000"></div><div class="a" style="left:4.7px;top:26.7px;width:84.7px;height:84.5px;background:#fe0000"></div></div>
<div class="node" style="left:1109.5px;top:227px;width:124.5px;height:494.5px"><div class="hd" style="height:19.5px;background:linear-gradient(to right,#8a7a6c 0%,#75685c 50%,#3a3530 90%,#2a2826 100%)"></div><div class="nt" style="left:12px;top:9.55px">GTMaterial</div></div>
<div class="pd" style="left:1136.5px;top:260.1px">基础颜色</div>
<div class="pd" style="left:1136.5px;top:283.6px">Metallic</div>
<div class="pd" style="left:1136.5px;top:307.1px">高光度</div>
<div class="pd" style="left:1136.5px;top:330.6px">粗糙度</div>
<div class="pd" style="left:1136.5px;top:354.1px">各向异性</div>
<div class="pl" style="left:1137px;top:377.6px">自发光颜色</div>
<div class="pd" style="left:1136.5px;top:401.1px">不透明度</div>
<div class="pd" style="left:1136.5px;top:424.6px">不透明蒙版</div>
<div class="pd" style="left:1136.5px;top:448.1px">Normal</div>
<div class="pd" style="left:1136.5px;top:471.6px">切线</div>
<div class="pd" style="left:1136.5px;top:495.1px">世界场景位置偏移</div>
<div class="pd" style="left:1136.5px;top:518.6px">世界场景位移</div>
<div class="pd" style="left:1136.5px;top:542.1px">曲面细分乘数</div>
<div class="pd" style="left:1136.5px;top:565.6px">Subsurface Color</div>
<div class="pd" style="left:1136.5px;top:589.1px">Custom Data 0</div>
<div class="pd" style="left:1136.5px;top:612.6px">Custom Data 1</div>
<div class="pd" style="left:1136.5px;top:636.1px">环境光遮挡</div>
<div class="pd" style="left:1136.5px;top:659.6px">折射</div>
<div class="pd" style="left:1136.5px;top:683.1px">像素深度偏移</div>
<div class="pd" style="left:1136.5px;top:706.6px">着色模型</div>
<svg class="a" style="left:0;top:0;pointer-events:none" width="1321" height="761" viewBox="0 0 1321 761"><path d="M521.5 317.5 C537.3 317.5 540.2 304.5 556.0 304.5 M636.5 304.5 C647.2 304.5 657.3 304.0 668.0 304.0 M759.5 304.0 C822.3 304.0 801.7 387.5 864.5 387.5 M521.5 457.5 C542.5 457.5 549.0 472.0 570.0 472.0 M650.5 472.0 C684.3 472.0 704.2 486.0 738.0 486.0 M509.5 583.5 C534.0 583.5 545.5 570.5 570.0 570.5 M650.5 570.5 C700.0 570.5 688.5 509.4 738.0 509.4 M645.5 640.0 C712.1 640.0 671.4 532.8 738.0 532.8 M645.5 696.0 C722.9 696.0 660.6 556.2 738.0 556.2 M645.5 696.0 C715.1 696.0 668.4 579.6 738.0 579.6 M811.5 486.0 C854.2 486.0 821.8 411.0 864.5 411.0 M934.0 387.5 C968.2 387.5 983.8 369.0 1018.0 369.0 M972.5 262.0 C1015.5 262.0 975.0 345.5 1018.0 345.5 M1087.5 345.5 C1108.9 345.5 1097.6 378.3 1119.0 378.3" fill="none" stroke="#ededed" stroke-width="1.8" stroke-linecap="round" opacity=".24"/><path d="M369.2 315.2 l2.8 2.3 l-2.8 2.3z" fill="#333"/><circle cx="365.0" cy="317.5" r="3.6" fill="#050505" stroke="#363636" stroke-width="1.8"/><path d="M518.2 315.2 l2.8 2.3 l-2.8 2.3z" fill="#c4c4c4"/><circle cx="514.0" cy="317.5" r="4.8" fill="#fafafa"/><path d="M518.2 338.9 l2.8 2.3 l-2.8 2.3z" fill="#cfcfcf"/><circle cx="514.0" cy="341.2" r="3.6" fill="#101010" stroke="#e2e2e2" stroke-width="1.8"/><path d="M518.2 362.0 l2.8 2.3 l-2.8 2.3z" fill="#cfcfcf"/><circle cx="514.0" cy="364.3" r="3.6" fill="#101010" stroke="#e2e2e2" stroke-width="1.8"/><path d="M369.2 455.2 l2.8 2.3 l-2.8 2.3z" fill="#333"/><circle cx="365.0" cy="457.5" r="3.6" fill="#050505" stroke="#363636" stroke-width="1.8"/><path d="M518.2 455.2 l2.8 2.3 l-2.8 2.3z" fill="#c4c4c4"/><circle cx="514.0" cy="457.5" r="4.8" fill="#fafafa"/><path d="M518.2 478.9 l2.8 2.3 l-2.8 2.3z" fill="#cfcfcf"/><circle cx="514.0" cy="481.2" r="3.6" fill="#101010" stroke="#e2e2e2" stroke-width="1.8"/><path d="M518.2 502.0 l2.8 2.3 l-2.8 2.3z" fill="#cfcfcf"/><circle cx="514.0" cy="504.3" r="3.6" fill="#101010" stroke="#e2e2e2" stroke-width="1.8"/><path d="M369.2 581.2 l2.8 2.3 l-2.8 2.3z" fill="#333"/><circle cx="365.0" cy="583.5" r="3.6" fill="#050505" stroke="#363636" stroke-width="1.8"/><path d="M506.2 581.2 l2.8 2.3 l-2.8 2.3z" fill="#c4c4c4"/><circle cx="502.0" cy="583.5" r="4.8" fill="#fafafa"/><path d="M506.2 604.9 l2.8 2.3 l-2.8 2.3z" fill="#cfcfcf"/><circle cx="502.0" cy="607.2" r="3.6" fill="#101010" stroke="#e2e2e2" stroke-width="1.8"/><path d="M506.2 628.0 l2.8 2.3 l-2.8 2.3z" fill="#cfcfcf"/><circle cx="502.0" cy="630.3" r="3.6" fill="#101010" stroke="#e2e2e2" stroke-width="1.8"/><path d="M565.2 302.2 l2.8 2.3 l-2.8 2.3z" fill="#c4c4c4"/><circle cx="561.0" cy="304.5" r="4.8" fill="#fafafa"/><path d="M633.2 302.2 l2.8 2.3 l-2.8 2.3z" fill="#c4c4c4"/><circle cx="629.0" cy="304.5" r="4.8" fill="#fafafa"/><path d="M579.2 469.7 l2.8 2.3 l-2.8 2.3z" fill="#c4c4c4"/><circle cx="575.0" cy="472.0" r="4.8" fill="#fafafa"/><path d="M647.2 469.7 l2.8 2.3 l-2.8 2.3z" fill="#c4c4c4"/><circle cx="643.0" cy="472.0" r="4.8" fill="#fafafa"/><path d="M579.2 568.2 l2.8 2.3 l-2.8 2.3z" fill="#c4c4c4"/><circle cx="575.0" cy="570.5" r="4.8" fill="#fafafa"/><path d="M647.2 568.2 l2.8 2.3 l-2.8 2.3z" fill="#c4c4c4"/><circle cx="643.0" cy="570.5" r="4.8" fill="#fafafa"/><path d="M677.2 301.7 l2.8 2.3 l-2.8 2.3z" fill="#2e2e2e"/><circle cx="673.0" cy="304.0" r="4.8" fill="#3c3c3c"/><path d="M677.2 324.7 l2.8 2.3 l-2.8 2.3z" fill="#333"/><circle cx="673.0" cy="327.0" r="3.6" fill="#050505" stroke="#363636" stroke-width="1.8"/><path d="M756.2 301.7 l2.8 2.3 l-2.8 2.3z" fill="#c4c4c4"/><circle cx="752.0" cy="304.0" r="4.8" fill="#fafafa"/><path d="M747.2 483.7 l2.8 2.3 l-2.8 2.3z" fill="#c4c4c4"/><circle cx="743.0" cy="486.0" r="4.8" fill="#fafafa"/><path d="M747.2 507.1 l2.8 2.3 l-2.8 2.3z" fill="#2e2e2e"/><circle cx="743.0" cy="509.4" r="4.8" fill="#3c3c3c"/><path d="M747.2 530.5 l2.8 2.3 l-2.8 2.3z" fill="#c4c4c4"/><circle cx="743.0" cy="532.8" r="4.8" fill="#fafafa"/><path d="M747.2 553.9 l2.8 2.3 l-2.8 2.3z" fill="#2e2e2e"/><circle cx="743.0" cy="556.2" r="4.8" fill="#3c3c3c"/><path d="M747.2 577.3 l2.8 2.3 l-2.8 2.3z" fill="#c4c4c4"/><circle cx="743.0" cy="579.6" r="4.8" fill="#fafafa"/><path d="M808.2 483.7 l2.8 2.3 l-2.8 2.3z" fill="#c4c4c4"/><circle cx="804.0" cy="486.0" r="4.8" fill="#fafafa"/><path d="M642.2 637.7 l2.8 2.3 l-2.8 2.3z" fill="#c4c4c4"/><circle cx="638.0" cy="640.0" r="4.8" fill="#fafafa"/><path d="M642.2 693.7 l2.8 2.3 l-2.8 2.3z" fill="#c4c4c4"/><circle cx="638.0" cy="696.0" r="4.8" fill="#fafafa"/><path d="M873.7 385.2 l2.8 2.3 l-2.8 2.3z" fill="#2e2e2e"/><circle cx="869.5" cy="387.5" r="4.8" fill="#3c3c3c"/><path d="M873.7 408.7 l2.8 2.3 l-2.8 2.3z" fill="#2e2e2e"/><circle cx="869.5" cy="411.0" r="4.8" fill="#3c3c3c"/><path d="M930.7 385.2 l2.8 2.3 l-2.8 2.3z" fill="#c4c4c4"/><circle cx="926.5" cy="387.5" r="4.8" fill="#fafafa"/><path d="M1027.2 343.2 l2.8 2.3 l-2.8 2.3z" fill="#2e2e2e"/><circle cx="1023.0" cy="345.5" r="4.8" fill="#3c3c3c"/><path d="M1027.2 366.7 l2.8 2.3 l-2.8 2.3z" fill="#2e2e2e"/><circle cx="1023.0" cy="369.0" r="4.8" fill="#3c3c3c"/><path d="M1084.2 343.2 l2.8 2.3 l-2.8 2.3z" fill="#c4c4c4"/><circle cx="1080.0" cy="345.5" r="4.8" fill="#fafafa"/><path d="M969.2 259.7 l2.8 2.3 l-2.8 2.3z" fill="#c4c4c4"/><circle cx="965.0" cy="262.0" r="4.8" fill="#fafafa"/><path d="M1128.2 258.5 l2.8 2.3 l-2.8 2.3z" fill="#2c2c2c"/><circle cx="1124.0" cy="260.8" r="3.6" fill="#050505" stroke="#303030" stroke-width="1.8"/><path d="M1128.2 282.0 l2.8 2.3 l-2.8 2.3z" fill="#2c2c2c"/><circle cx="1124.0" cy="284.3" r="3.6" fill="#050505" stroke="#303030" stroke-width="1.8"/><path d="M1128.2 305.5 l2.8 2.3 l-2.8 2.3z" fill="#2c2c2c"/><circle cx="1124.0" cy="307.8" r="3.6" fill="#050505" stroke="#303030" stroke-width="1.8"/><path d="M1128.2 329.0 l2.8 2.3 l-2.8 2.3z" fill="#2c2c2c"/><circle cx="1124.0" cy="331.3" r="3.6" fill="#050505" stroke="#303030" stroke-width="1.8"/><path d="M1128.2 352.5 l2.8 2.3 l-2.8 2.3z" fill="#2c2c2c"/><circle cx="1124.0" cy="354.8" r="3.6" fill="#050505" stroke="#303030" stroke-width="1.8"/><path d="M1128.2 376.0 l2.8 2.3 l-2.8 2.3z" fill="#c4c4c4"/><circle cx="1124.0" cy="378.3" r="4.8" fill="#fafafa"/><path d="M1128.2 399.5 l2.8 2.3 l-2.8 2.3z" fill="#2c2c2c"/><circle cx="1124.0" cy="401.8" r="3.6" fill="#050505" stroke="#303030" stroke-width="1.8"/><path d="M1128.2 423.0 l2.8 2.3 l-2.8 2.3z" fill="#2c2c2c"/><circle cx="1124.0" cy="425.3" r="3.6" fill="#050505" stroke="#303030" stroke-width="1.8"/><path d="M1128.2 446.5 l2.8 2.3 l-2.8 2.3z" fill="#2c2c2c"/><circle cx="1124.0" cy="448.8" r="3.6" fill="#050505" stroke="#303030" stroke-width="1.8"/><path d="M1128.2 470.0 l2.8 2.3 l-2.8 2.3z" fill="#2c2c2c"/><circle cx="1124.0" cy="472.3" r="3.6" fill="#050505" stroke="#303030" stroke-width="1.8"/><path d="M1128.2 493.5 l2.8 2.3 l-2.8 2.3z" fill="#2c2c2c"/><circle cx="1124.0" cy="495.8" r="3.6" fill="#050505" stroke="#303030" stroke-width="1.8"/><path d="M1128.2 517.0 l2.8 2.3 l-2.8 2.3z" fill="#2c2c2c"/><circle cx="1124.0" cy="519.3" r="3.6" fill="#050505" stroke="#303030" stroke-width="1.8"/><path d="M1128.2 540.5 l2.8 2.3 l-2.8 2.3z" fill="#2c2c2c"/><circle cx="1124.0" cy="542.8" r="3.6" fill="#050505" stroke="#303030" stroke-width="1.8"/><path d="M1128.2 564.0 l2.8 2.3 l-2.8 2.3z" fill="#2c2c2c"/><circle cx="1124.0" cy="566.3" r="3.6" fill="#050505" stroke="#303030" stroke-width="1.8"/><path d="M1128.2 587.5 l2.8 2.3 l-2.8 2.3z" fill="#2c2c2c"/><circle cx="1124.0" cy="589.8" r="3.6" fill="#050505" stroke="#303030" stroke-width="1.8"/><path d="M1128.2 611.0 l2.8 2.3 l-2.8 2.3z" fill="#2c2c2c"/><circle cx="1124.0" cy="613.3" r="3.6" fill="#050505" stroke="#303030" stroke-width="1.8"/><path d="M1128.2 634.5 l2.8 2.3 l-2.8 2.3z" fill="#2c2c2c"/><circle cx="1124.0" cy="636.8" r="3.6" fill="#050505" stroke="#303030" stroke-width="1.8"/><path d="M1128.2 658.0 l2.8 2.3 l-2.8 2.3z" fill="#2c2c2c"/><circle cx="1124.0" cy="660.3" r="3.6" fill="#050505" stroke="#303030" stroke-width="1.8"/><path d="M1128.2 681.5 l2.8 2.3 l-2.8 2.3z" fill="#2c2c2c"/><circle cx="1124.0" cy="683.8" r="3.6" fill="#050505" stroke="#303030" stroke-width="1.8"/><path d="M1128.2 705.0 l2.8 2.3 l-2.8 2.3z" fill="#2c2c2c"/><circle cx="1124.0" cy="707.3" r="3.6" fill="#050505" stroke="#303030" stroke-width="1.8"/></svg>
<svg class="a" style="left:764.5px;top:685px" width="53" height="43.5" viewBox="0 0 56 46"><g fill="#bababa"><path d="M20 2 C9.5 2 2 8.8 2 17 c0 4.6 2.5 8.7 6.4 11.5 L6.6 34 l6.6 -3.4 c2.2 .6 4.4 .9 6.8 .9 c.6 0 1.2 0 1.8 -.1 c-.4 -1.2 -.6 -2.5 -.6 -3.8 c0 -7.6 7.3 -13.7 16.200 -13.700 c.5 0 1 0 1.500 .1 C37.200 7.200 29.400 2 20 2z"/><path d="M54 27.700 c0 -6.600 -6.600 -12 -14.600 -12 c-8.200 0 -14.700 5.400 -14.700 12 s6.500 12 14.700 12 c1.800 0 3.500 -.3 5.100 -.7 l5.200 2.800 l-1.400 -4.600 C51.700 34.800 54 31.500 54 27.700z"/></g><g fill="#262626"><circle cx="14" cy="12.500" r="2.100"/><circle cx="25.500" cy="12.500" r="2.100"/><circle cx="34.500" cy="24.500" r="1.800"/><circle cx="44" cy="24.500" r="1.800"/></g></svg>
<div class="t" style="left:1184px;top:684px;font-size:60.5px;color:rgba(255,255,255,.17)">材质</div>
<div class="t" style="left:825.5px;top:690px;font-size:35.5px;font-weight:500;color:rgba(190,190,190,.8)">公众号</div>
<div class="t" style="left:947.5px;top:690px;font-size:35.5px;font-weight:500;color:rgba(190,190,190,.8)">·</div>
<div class="t" style="left:976px;top:690px;font-size:35.5px;font-weight:500;color:rgba(190,190,190,.8);letter-spacing:.8px">CARLA引擎中文站</div>
<div class="t" style="left:1003px;top:686px;font-size:37.5px;color:#fff;text-shadow:1px 1px 2px rgba(0,0,0,.9),-1px -1px 2px rgba(0,0,0,.7),0 0 3px rgba(0,0,0,.8)">知乎</div>
<div class="t" style="left:1097px;top:684.5px;font-size:33.5px;color:#fff;text-shadow:1px 1px 2px rgba(0,0,0,.9),-1px -1px 2px rgba(0,0,0,.7),0 0 3px rgba(0,0,0,.8)">@</div>
<div class="t" style="left:1133px;top:686px;font-size:37.5px;color:#fff;text-shadow:1px 1px 2px rgba(0,0,0,.9),-1px -1px 2px rgba(0,0,0,.7),0 0 3px rgba(0,0,0,.8);letter-spacing:-.4px">野比大尼</div>
</div>
</body></html>
